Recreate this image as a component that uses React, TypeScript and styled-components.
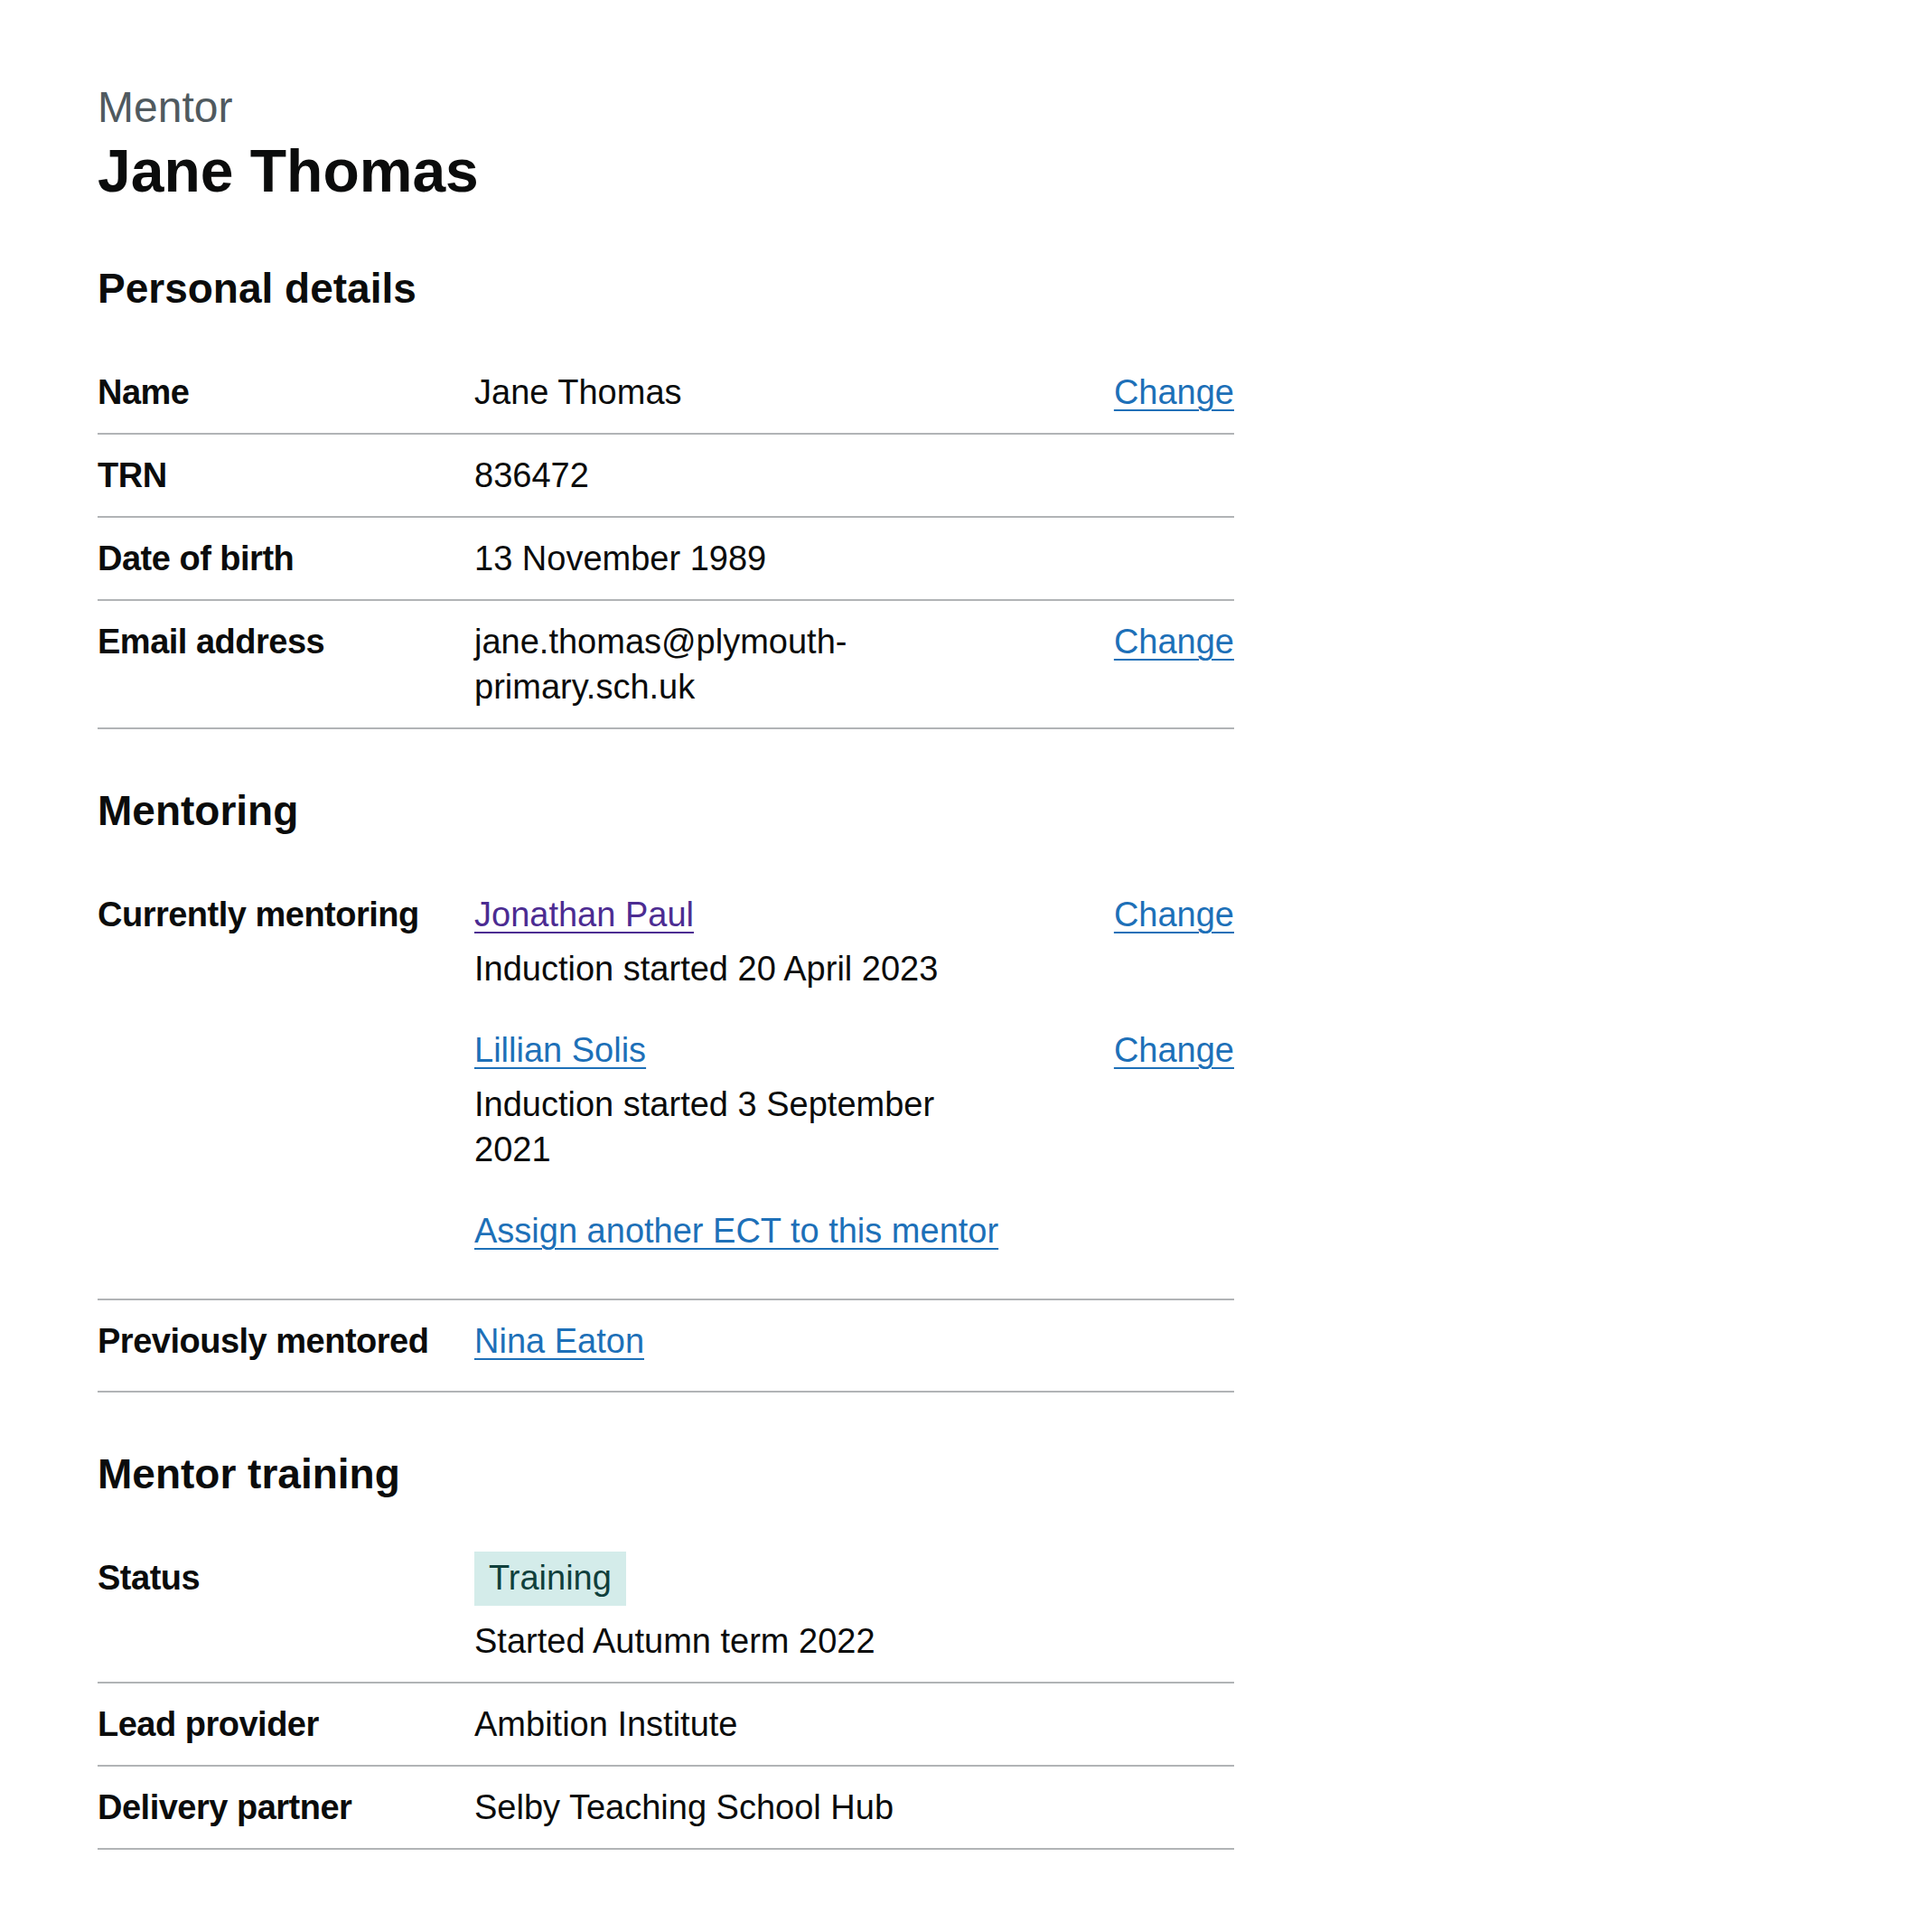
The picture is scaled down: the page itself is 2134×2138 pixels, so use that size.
import React from "react";
import styled, { createGlobalStyle } from "styled-components";

const GlobalStyle = createGlobalStyle`
    html,
    body {
        margin: 0;
        background: #ffffff;
    }

    body {
        font-family: "Liberation Sans", Arial, sans-serif;
        color: #0b0c0c;
    }
`;

const Main = styled.main`
    width: 1258px;
    padding: 89px 0 60px 108px;
`;

const Caption = styled.span`
    display: block;
    font-size: 48px;
    line-height: 60px;
    color: #505a5f;
`;

const PageTitle = styled.h1`
    margin: 0 0 60px;
    font-size: 66px;
    line-height: 80px;
    font-weight: 700;
`;

const SectionHeading = styled.h2`
    margin: 0 0 40px;
    font-size: 46px;
    line-height: 60px;
    font-weight: 700;
`;

const SummaryList = styled.dl`
    margin: 0 0 60px;
    font-size: 38px;
    line-height: 50px;
`;

const Row = styled.div`
    display: grid;
    grid-template-columns: 385px 590px 1fr;
    column-gap: 32px;
    padding: 20px 0;
    border-bottom: 2px solid #b1b4b6;
`;

const Key = styled.dt`
    font-weight: 700;
    letter-spacing: -0.5px;
`;

const Value = styled.dd<{ $wide?: boolean }>`
    margin: 0;
    grid-column: ${(props) => (props.$wide ? "2 / 4" : "auto")};
`;

const Actions = styled.dd`
    margin: 0;
    text-align: right;
`;

const Link = styled.a<{ $visited?: boolean }>`
    color: ${(props) => (props.$visited ? "#4c2c92" : "#1d70b8")};
    text-decoration: underline;
    text-decoration-thickness: 2px;
    text-underline-offset: 6px;
    cursor: pointer;
`;

const Paragraph = styled.p<{ $gap?: number }>`
    margin: 0 0 ${(props) => props.$gap ?? 0}px;
`;

const Mentee = styled.div`
    display: grid;
    grid-template-columns: 590px 1fr;
    column-gap: 32px;
    row-gap: 10px;
    margin-bottom: 40px;
`;

const MenteeAction = styled.div`
    text-align: right;
`;

const TagLine = styled.div`
    margin: -4px 0 14px;
`;

const Tag = styled.strong`
    display: inline-block;
    padding: 4px 16px 6px;
    font-weight: 400;
    color: #10403c;
    background: #d4ecea;
`;

interface DetailRow {
    key: string;
    value: React.ReactNode;
    change?: boolean;
}

const PERSONAL: DetailRow[] = [
    { key: "Name", value: "Jane Thomas", change: true },
    { key: "TRN", value: "836472" },
    { key: "Date of birth", value: "13 November 1989" },
    { key: "Email address", value: "jane.thomas@plymouth-primary.sch.uk", change: true },
];

const TRAINING: DetailRow[] = [
    { key: "Lead provider", value: "Ambition Institute" },
    { key: "Delivery partner", value: "Selby Teaching School Hub" },
];

const MENTEES = [
    { name: "Jonathan Paul", started: "Induction started 20 April 2023", visited: true },
    { name: "Lillian Solis", started: "Induction started 3 September 2021", visited: false },
];

const renderRow = (row: DetailRow) => (
    <Row key={row.key}>
        <Key>{row.key}</Key>
        <Value>{row.value}</Value>
        {row.change && (
            <Actions>
                <Link href="#">Change</Link>
            </Actions>
        )}
    </Row>
);

const App: React.FC = () => {
    return (
        <>
            <GlobalStyle />
            <Main>
                <Caption>Mentor</Caption>
                <PageTitle>Jane Thomas</PageTitle>

                <SectionHeading>Personal details</SectionHeading>
                <SummaryList>{PERSONAL.map(renderRow)}</SummaryList>

                <SectionHeading>Mentoring</SectionHeading>
                <SummaryList>
                    <Row>
                        <Key>Currently mentoring</Key>
                        <Value $wide>
                            {MENTEES.map((mentee) => (
                                <Mentee key={mentee.name}>
                                    <div>
                                        <Link href="#" $visited={mentee.visited}>
                                            {mentee.name}
                                        </Link>
                                    </div>
                                    <MenteeAction>
                                        <Link href="#">Change</Link>
                                    </MenteeAction>
                                    <div>{mentee.started}</div>
                                </Mentee>
                            ))}
                            <Paragraph $gap={30}>
                                <Link href="#">Assign another ECT to this mentor</Link>
                            </Paragraph>
                        </Value>
                    </Row>
                    <Row>
                        <Key>Previously mentored</Key>
                        <Value>
                            <Paragraph $gap={10}>
                                <Link href="#">Nina Eaton</Link>
                            </Paragraph>
                        </Value>
                    </Row>
                </SummaryList>

                <SectionHeading>Mentor training</SectionHeading>
                <SummaryList>
                    <Row>
                        <Key>Status</Key>
                        <Value>
                            <TagLine>
                                <Tag>Training</Tag>
                            </TagLine>
                            <Paragraph>Started Autumn term 2022</Paragraph>
                        </Value>
                    </Row>
                    {TRAINING.map(renderRow)}
                </SummaryList>
            </Main>
        </>
    );
};

export default App;
